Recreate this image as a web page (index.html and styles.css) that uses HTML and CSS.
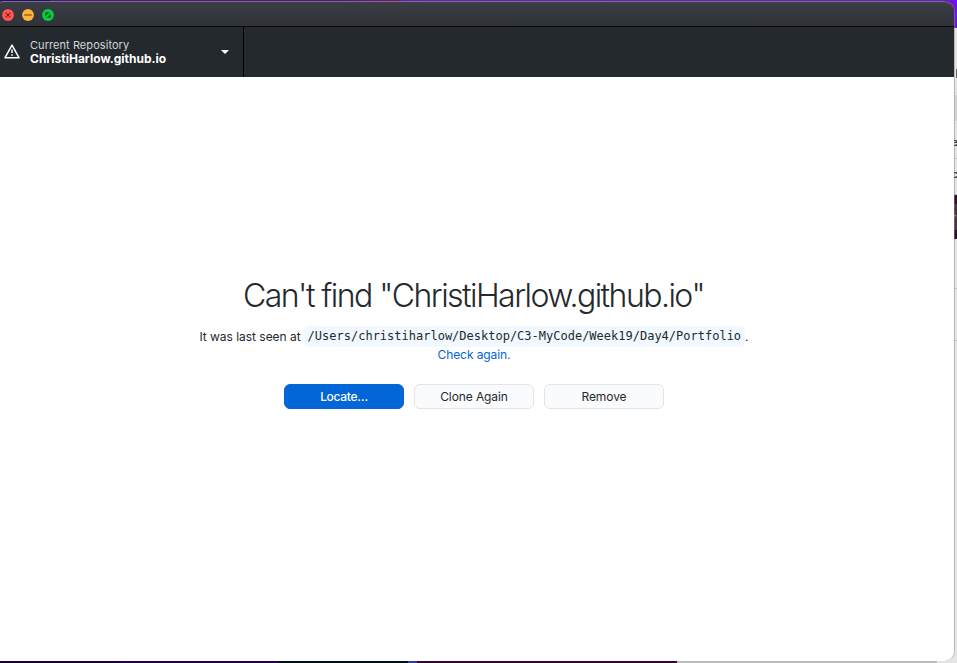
FILE: index.html
```
<!DOCTYPE html>
<html lang="en">
<head>
<meta charset="utf-8">
<title>GitHub Desktop</title>
<link rel="stylesheet" href="styles.css">
</head>
<body>
<div class="desktop">
  <div class="behind">
    <div class="behind-purple"></div>
    <div class="behind-bar"></div>
    <div class="behind-field"></div>
    <div class="behind-row first"><span>e</span></div>
    <div class="behind-row second"><span>c</span></div>
    <div class="behind-dark"><span>r</span></div>
    <div class="behind-row third"></div>
    <div class="behind-row fourth"></div>
  </div>
  <main class="window">
    <header class="titlebar">
      <svg class="light" viewBox="0 0 12 12"><circle cx="6" cy="6" r="5.9" fill="#ff5753"/><path d="M3.6 3.6l4.8 4.8M8.4 3.6L3.6 8.4" stroke="#8e1519" stroke-width="1.1"/></svg>
      <svg class="light" viewBox="0 0 12 12"><circle cx="6" cy="6" r="5.9" fill="#fdb43f"/><path d="M2.2 6h7.6" stroke="#a76112" stroke-width="1.5"/></svg>
      <svg class="light" viewBox="0 0 12 12"><circle cx="6" cy="6" r="5.9" fill="#08cc46"/><path d="M3.2 7.6V3.2h4.4zM8.8 4.4v4.4H4.4z" fill="#075f20"/></svg>
    </header>
    <nav class="toolbar">
      <div class="repo">
        <svg class="alert" viewBox="0 0 16 16"><path d="M8 1.1L15.1 13.8H.9z" fill="none" stroke="#fff" stroke-width="1.5" stroke-linejoin="round"/><path d="M8 5.6v3.5M8 10.3v1.5" stroke="#fff" stroke-width="1.5"/></svg>
        <div class="repo-text">
          <div class="label">Current Repository</div>
          <div class="name">ChristiHarlow.github.io</div>
        </div>
        <svg class="caret" viewBox="0 0 8 4"><path d="M0 0h8L4 4z" fill="#fff"/></svg>
      </div>
    </nav>
    <section class="missing">
      <h1>Can't find "ChristiHarlow.github.io"</h1>
      <div class="seen"><span>It was last seen at</span><code>/Users/christiharlow/Desktop/C3-MyCode/Week19/Day4/Portfolio</code><span>.</span></div>
      <a class="check">Check again.</a>
      <div class="actions">
        <button class="primary">Locate…</button>
        <button>Clone Again</button>
        <button>Remove</button>
      </div>
    </section>
  </main>
</div>
</body>
</html>
```
FILE: styles.css
```
* { box-sizing: border-box; }
body { margin: 0; font-family: Inter, sans-serif; color: #24292e; overflow: hidden; }
.desktop {
  position: relative;
  width: 957px;
  height: 663px;
  padding-top: 1px;
  background:
    linear-gradient(90deg, #2a087c 0 50px, #551089 50px 340px, #880b83 400px, #651bcc 403px, #6b16dc) top / 100% 20px no-repeat,
    linear-gradient(90deg, #16003a 0 120px, #250050 120px 278px, #001014 278px 408px, #303ba5 408px 417px, #35052f 417px 677px, #bcbcbc 677px) bottom / 100% 10px no-repeat,
    #e5e5e5;
}
.behind {
  position: absolute;
  top: 0;
  right: 0;
  width: 20px;
  height: 663px;
  background: #e5e5e5;
  font: 10px/12px Inter, sans-serif;
  color: #222;
}
.behind-purple { height: 28px; background: #7013e0; }
.behind-bar { height: 9px; margin: 41px 0 0 19px; background: #666; }
.behind-field { height: 26px; margin-top: 17px; background: #d5d5d5; }
.behind-row { display: flex; justify-content: flex-end; border-bottom: 1px solid #c5c5c5; }
.behind-row span, .behind-dark span { width: 5px; font-weight: 600; }
.first { height: 38px; padding-top: 15px; }
.second { height: 36px; padding-top: 9px; }
.behind-dark { display: flex; justify-content: flex-end; height: 44px; padding-top: 16px; background: linear-gradient(#2e1029 0 9px, #4b3247 9px 35px, #2e1029 35px); color: #aaa; }
.third { height: 50px; }
.fourth { height: 52px; }
.window {
  position: relative;
  display: flex;
  flex-direction: column;
  width: 954px;
  height: 660px;
  overflow: hidden;
  background: linear-gradient(#303238 0 40px, #fff 40px);
  border-radius: 0 10px 10px 0;
  box-shadow: 1px 0 0 #8c8c8c80;
}
.titlebar {
  display: flex;
  flex: none;
  gap: 8px;
  align-items: center;
  height: 26px;
  padding: 2px 0 0 2px;
  background: linear-gradient(#3c3e46, #303238);
  border-top: 1px solid #777579;
  border-bottom: 1px solid #050607;
  border-radius: 3px 10px 0 0;
}
.light { width: 12px; height: 12px; }
.toolbar { display: flex; flex: none; height: 50px; background: #24292e; }
.repo { display: flex; align-items: center; width: 244px; padding: 0 14px 0 4px; border-right: 1px solid #000; }
.alert { width: 16px; height: 16px; margin-right: 10px; }
.repo-text { flex: 1; white-space: nowrap; padding-top: 1px; }
.label { font-size: 11px; line-height: 13px; letter-spacing: 0.06px; color: #d1d5da; }
.name { font-size: 12px; line-height: 14px; font-weight: 700; color: #fff; }
.caret { width: 8px; height: 4px; }
.missing { display: flex; flex: 1; flex-direction: column; align-items: center; width: 947px; padding-top: 198px; }
h1 { margin: 0; font-size: 32px; line-height: 42px; font-weight: 300; letter-spacing: -1.54px; white-space: nowrap; }
.seen { display: flex; align-items: center; height: 21px; margin-top: 9px; padding-left: 1px; font-size: 12px; letter-spacing: -0.03px; white-space: nowrap; }
code { height: 21px; margin: 0 0 0 3px; padding: 0 4px; font: 12px/20px "DejaVu Sans Mono", monospace; letter-spacing: 0; background: #f1f8ff; border-radius: 5px; }
.check { padding-left: 1px; font-size: 12px; line-height: 16px; letter-spacing: -0.08px; color: #0366d6; }
.actions { display: flex; gap: 10px; margin-top: 21px; }
button { width: 120px; height: 25px; padding: 0 0 0 1px; font: 12px Inter, sans-serif; letter-spacing: -0.1px; color: #24292e; background: #fafbfc; border: 1px solid #e1e4e8; border-radius: 6px; }
.primary { color: #fff; font-weight: 500; letter-spacing: -0.3px; background: #0366d6; border-color: #0366d6; }
```
